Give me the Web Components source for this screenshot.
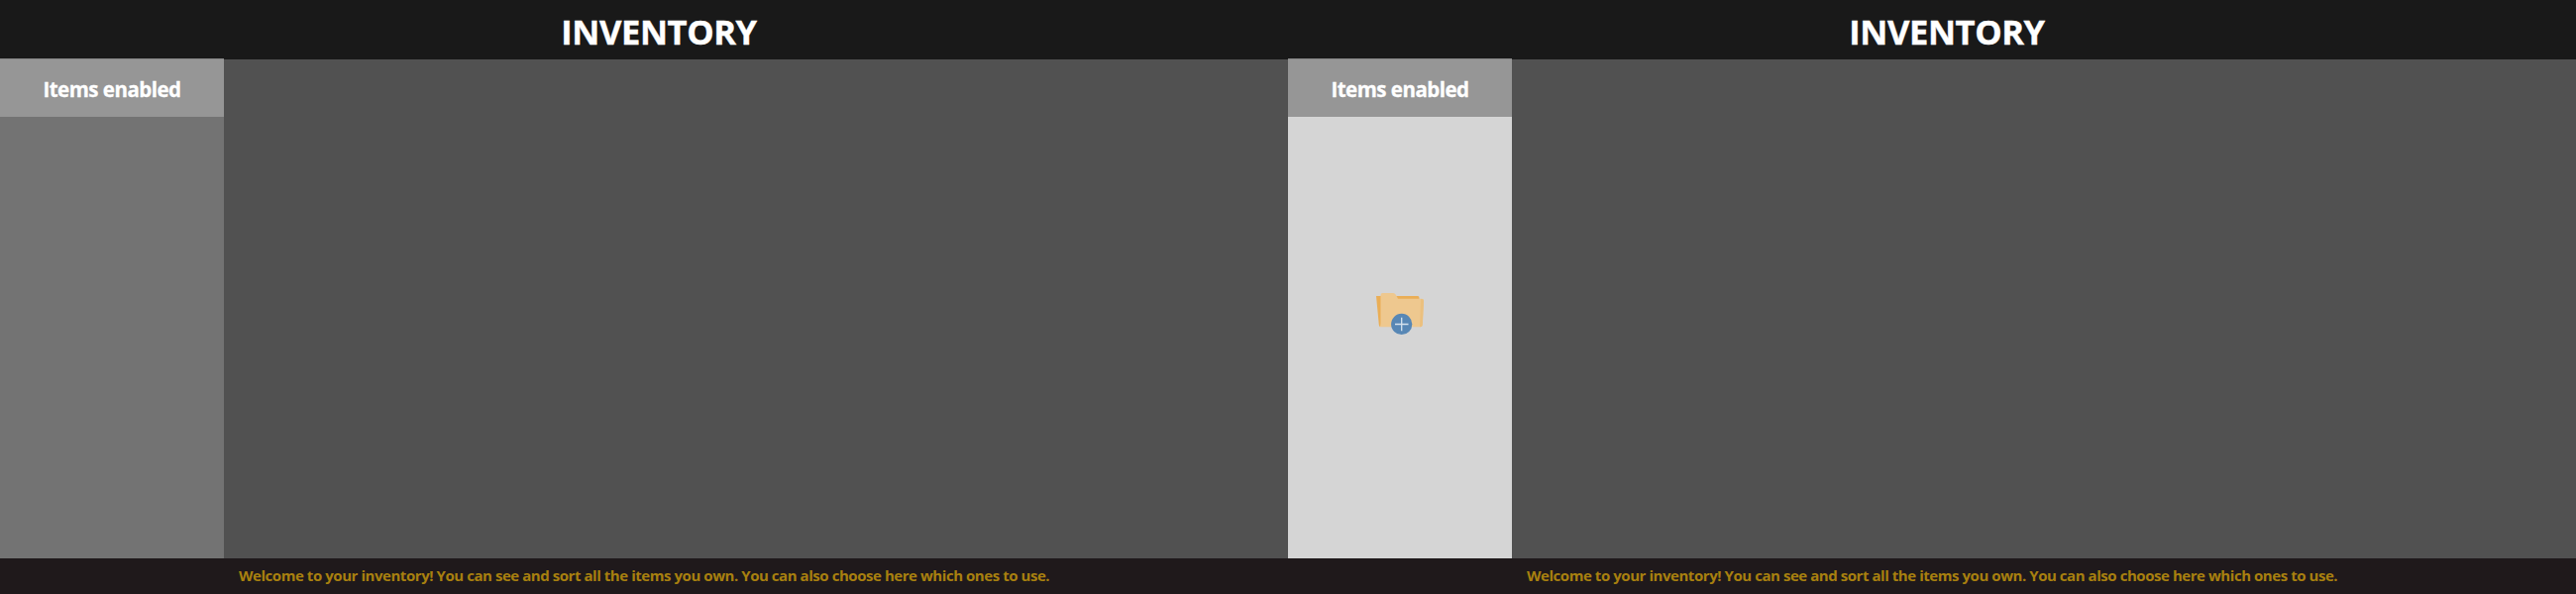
<!DOCTYPE html>
<html lang="en"><head><meta charset="utf-8"><title>Inventory</title>
<style>html,body{margin:0;height:100%}body{display:grid;grid-template-columns:1fr 1fr;height:600px;overflow:hidden;font-family:"Open Sans","Noto Sans",sans-serif;font-weight:700}</style></head>
<body>
<inventory-window><enabled-items slot="side">Items enabled</enabled-items></inventory-window>
<inventory-window><enabled-items slot="side" dropping>Items enabled<folder-icon slot="drop"></folder-icon></enabled-items></inventory-window>
<script>
class InventoryWindow extends HTMLElement{constructor(){super();this.attachShadow({mode:'open'}).innerHTML=`
<style>
:host{display:grid;grid-template-rows:60px 504px 36px;height:600px;background:#515151;overflow:hidden}
header{background:#191919;color:#fff;display:flex;justify-content:center;align-items:center;box-sizing:border-box;padding:3px 0 0 30px}
h1{margin:0;font-size:34.5px;line-height:50px;letter-spacing:-.4px;white-space:nowrap;-webkit-text-stroke:.4px #fff}
main{display:flex}
footer{background:#1f191b;color:#a8800f;box-sizing:border-box;padding-left:241px;font-size:15px;line-height:35px;white-space:nowrap;letter-spacing:-.445px}
</style>
<header><h1>INVENTORY</h1></header><main><slot name="side"></slot></main>
<footer><span>Welcome to your inventory! You can see and sort all the items you own. You can also choose here which ones to use.</span></footer>`}}
class EnabledItems extends HTMLElement{constructor(){super();this.attachShadow({mode:'open'}).innerHTML=`
<style>
:host{display:flex;flex-direction:column;width:226px;height:505px;margin-top:-1px;background:#737373}
:host([dropping]){background:#d5d5d5}
.title{height:59px;box-sizing:border-box;border-top:1px solid #858585;background:#969696;color:#fff;text-align:center;font-size:20.5px;line-height:61px;letter-spacing:-.5px;white-space:nowrap;-webkit-text-stroke:.3px #fff}
.drop{flex:1;display:flex;align-items:center;justify-content:center}
</style>
<div class="title"><span><slot></slot></span></div><div class="drop"><slot name="drop"></slot></div>`}}
class FolderIcon extends HTMLElement{constructor(){super();this.attachShadow({mode:'open'}).innerHTML=`
<style>:host{display:block;width:50px;height:50px;margin-top:-50px}svg{display:block}</style>
<svg width="50" height="50" viewBox="1388 291 50 50">
<path d="M1389 299H1431Q1432.500 299 1432.500 301V318L1393 330Q1392 330 1391.800 328Z" fill="#eaae56"/>
<path d="M1393.500 298Q1393.500 296 1395.500 296H1406Q1408 296 1409 298L1411 301.800H1435Q1437 301.800 1437 304L1435.800 328Q1435.500 330.200 1433.500 330.200H1392.500Q1393.500 329 1393.500 326Z" fill="#eec88f"/>
<path d="M1434 302H1435Q1437 302 1437 304L1435.800 328Q1435.500 330.200 1433.500 330.200H1433Z" fill="#ebc07e"/>
<circle cx="1414.700" cy="327.400" r="10.600" fill="#5787b5"/>
<path d="M1408 327.500H1421.500M1414.700 320.700V334.200" stroke="#d5e2ed" stroke-width="1.300"/>
</svg>`}}
customElements.define('inventory-window',InventoryWindow);
customElements.define('enabled-items',EnabledItems);
customElements.define('folder-icon',FolderIcon);
</script>
</body></html>
